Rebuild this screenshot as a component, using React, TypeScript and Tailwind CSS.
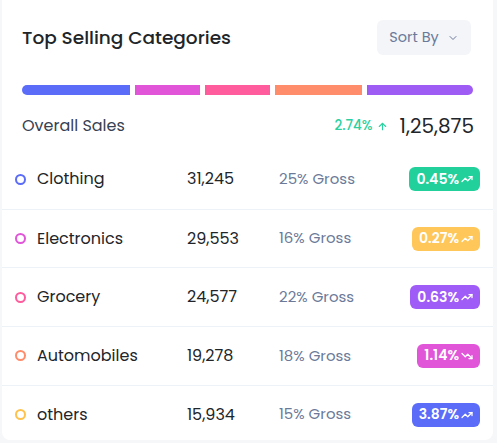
import React from 'react';
import { ArrowUp, ChevronDown, TrendingDown, TrendingUp } from 'lucide-react';

const segments = [
  { w: 'w-[108px]', color: 'bg-[#5b6cf9]', round: 'rounded-l-full' },
  { w: 'w-[65px]', color: 'bg-[#e155d9]', round: '' },
  { w: 'w-[65px]', color: 'bg-[#ff5c9d]', round: '' },
  { w: 'w-[87px]', color: 'bg-[#ff8c6b]', round: '' },
  { w: 'flex-1', color: 'bg-[#9f5cf5]', round: 'rounded-r-full' },
];

const rows = [
  { name: 'Clothing', value: '31,245', gross: '25% Gross', change: '0.45%', up: true, dot: 'border-[#5b6cf9]', badge: 'bg-[#22d09c]' },
  { name: 'Electronics', value: '29,553', gross: '16% Gross', change: '0.27%', up: true, dot: 'border-[#e155d9]', badge: 'bg-[#ffc75a]' },
  { name: 'Grocery', value: '24,577', gross: '22% Gross', change: '0.63%', up: true, dot: 'border-[#ff5c9d]', badge: 'bg-[#a05cf6]' },
  { name: 'Automobiles', value: '19,278', gross: '18% Gross', change: '1.14%', up: false, dot: 'border-[#ff8c6b]', badge: 'bg-[#e155d9]' },
  { name: 'others', value: '15,934', gross: '15% Gross', change: '3.87%', up: true, dot: 'border-[#ffc24d]', badge: 'bg-[#5b6cf9]' },
];

export default function App() {
  return (
    <div className="w-[497px] h-[443px] bg-[#f6f7f9] pl-[2px] pr-[4px] pb-[3px] font-['Poppins','Inter',sans-serif]">
      <div className="h-full bg-white rounded-b-lg flex flex-col">
        {/* Header */}
        <div className="flex items-center justify-between pl-[20px] pr-[22px] pt-[20px]">
          <h2 className="text-[18.5px] font-medium text-[#212529]">Top Selling Categories</h2>
          <button className="h-[35px] w-[94px] rounded-md bg-[#f3f5f9] flex items-center justify-center gap-2 text-[14.5px] text-[#6b7a99]">
            Sort By <ChevronDown size={12} strokeWidth={2} />
          </button>
        </div>

        {/* Bar */}
        <div className="flex gap-[5px] pl-[20px] pr-[20px] mt-[30px]">
          {segments.map((s, i) => (
            <div key={i} className={`h-[10px] ${s.w} ${s.color} ${s.round}`} />
          ))}
        </div>

        {/* Overall */}
        <div className="flex items-center justify-between pl-[20px] pr-[19px] mt-[16px]">
          <span className="text-[16px] text-[#374151]">Overall Sales</span>
          <div className="flex items-center gap-3">
            <span className="flex items-center gap-1 text-[13.5px] font-medium text-[#2bd19f]">
              2.74% <ArrowUp size={11} strokeWidth={2.5} />
            </span>
            <span className="text-[20px] text-[#212529]">1,25,875</span>
          </div>
        </div>

        {/* Rows */}
        <div className="flex flex-col mt-[9px]">
          {rows.map((r, i) => (
            <div
              key={r.name}
              className={`flex items-center h-[58.7px] pl-[13px] pr-[13px] ${i > 0 ? 'border-t border-[#edf1f8]' : ''}`}
            >
              <span className={`w-[11px] h-[11px] rounded-full border-2 ${r.dot}`} />
              <span className="ml-[11px] w-[150px] text-[16px] text-[#212529]">{r.name}</span>
              <span className="w-[92px] text-[16px] text-[#212529]">{r.value}</span>
              <span className="flex-1 text-[15px] text-[#6b7a99]">{r.gross}</span>
              <span className={`flex items-center gap-[2px] h-[24px] px-[7px] rounded-md text-[14px] font-semibold text-white ${r.badge}`}>
                {r.change}
                {r.up ? <TrendingUp size={12} strokeWidth={2.5} /> : <TrendingDown size={12} strokeWidth={2.5} />}
              </span>
            </div>
          ))}
        </div>
      </div>
    </div>
  );
}
